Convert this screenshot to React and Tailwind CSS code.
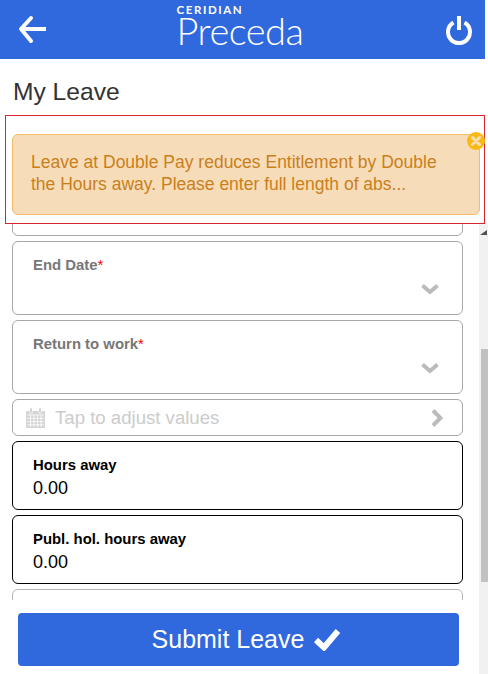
function BackIcon() {
  return (
    <svg width="30" height="30" viewBox="0 0 30 30" fill="none" stroke="white" strokeWidth="4" strokeLinecap="round" strokeLinejoin="round" className="ml-[18px]">
      <path d="M28 14H4" strokeLinecap="butt" />
      <path d="M13 3L3 14L13 26" />
    </svg>
  );
}

function PowerIcon() {
  return (
    <svg width="28" height="30" viewBox="0 0 28 30" fill="none" stroke="white" strokeWidth="4" className="mr-[12px]">
      <path d="M8.500 7.500A11 11 0 1 0 19.500 7.500" />
      <path d="M14 1V15" />
    </svg>
  );
}

function CalendarIcon() {
  return (
    <svg width="19" height="20" viewBox="0 0 19 20" className="ml-[13px] mr-[10px] shrink-0">
      <path fill="#d4d4d4" d="M1 3h2.500v2.500h3V3h6v2.500h3V3H18a1 1 0 0 1 1 1v15a1 1 0 0 1-1 1H1a1 1 0 0 1-1-1V4a1 1 0 0 1 1-1z" />
      <rect x="4" y="0" width="2" height="5" rx="1" fill="#d4d4d4" />
      <rect x="13" y="0" width="2" height="5" rx="1" fill="#d4d4d4" />
      <path stroke="white" strokeWidth="0.8" d="M1 7h17M1 10.300h17M1 13.600h17M1 16.900h17M4.500 7v12M8 7v12M11.500 7v12M15 7v12" />
    </svg>
  );
}

function ChevronDown() {
  return (
    <svg width="18" height="10" viewBox="0 0 18 10" fill="none" stroke="#bbb" strokeWidth="4" className="absolute right-[23px] top-[42px]">
      <path d="M1.500 1.500L9 8L16.500 1.500" />
    </svg>
  );
}

function ChevronRight() {
  return (
    <svg width="12" height="18" viewBox="0 0 12 18" fill="none" stroke="#bbb" strokeWidth="4" className="shrink-0">
      <path d="M2 1.500L9.500 9L2 16.500" />
    </svg>
  );
}

function CheckIcon() {
  return (
    <svg width="26" height="22" viewBox="0 0 26 22" fill="none" stroke="white" strokeWidth="6" className="shrink-0">
      <path d="M2 11L10 18.500L24 2" />
    </svg>
  );
}

function SelectField({ label, required, empty }) {
  return (
    <div className="relative h-[74px] shrink-0 rounded-md border border-[#a8a8a8] pl-5 pt-[14px]">
      {!empty && (
        <div className="text-[14.900px] leading-[18px] font-bold text-[#777]">
          {label}
          {required && <span className="text-[#f00] font-normal">*</span>}
        </div>
      )}
      {!empty && <ChevronDown />}
    </div>
  );
}

function ValueField({ label, value }) {
  return (
    <div className="h-[69px] shrink-0 rounded-md border border-black pl-5 pt-[14px] text-black">
      <div className="text-[14.900px] leading-[18px] font-bold">{label}</div>
      <div className="pt-px text-[18px] leading-[26px]">{value}</div>
    </div>
  );
}

export default function App() {
  return (
    <div className="relative flex h-[674px] w-[488px] flex-col overflow-hidden bg-white font-['Liberation_Sans',Arial,sans-serif]">
      <header className="flex h-[59px] w-[485px] shrink-0 items-center justify-between bg-[#3068dd]">
        <BackIcon />
        <div className="mr-[14px] flex w-[126px] flex-col self-start pt-[4px] text-white">
          <span className="font-['Lato',sans-serif] text-[11.500px] leading-[11px] font-bold tracking-[1.600px]">CERIDIAN</span>
          <span className="font-['Lato',sans-serif] text-[38px] leading-[30px] font-light tracking-[-0.500px]">Preceda</span>
        </div>
        <PowerIcon />
      </header>

      <div className="flex flex-1">
        <main className="flex w-[479px] flex-col">
          <h1 className="h-[56px] shrink-0 pl-[13px] pt-[17px] text-[24.600px] leading-[32px] font-normal text-[#333]">My Leave</h1>

          <div className="flex h-[485px] shrink-0 flex-col gap-[5px] overflow-hidden pl-3 pr-4 pt-[47px]">
            <SelectField empty />
            <SelectField label="End Date" required />
            <SelectField label="Return to work" required />
            <div className="flex h-[37px] shrink-0 items-center rounded-md border border-[#a8a8a8] pr-[19px] text-[18.600px] text-[#ccc]">
              <CalendarIcon />
              <span className="flex-1">Tap to adjust values</span>
              <ChevronRight />
            </div>
            <ValueField label="Hours away" value="0.00" />
            <ValueField label="Publ. hol. hours away" value="0.00" />
            <div className="h-[69px] shrink-0 rounded-md border border-[#b5b5b5]" />
          </div>

          <div className="pl-[18px] pt-[13px]">
            <button className="flex h-[53px] w-[441px] items-center justify-center gap-[10px] rounded-[4px] bg-[#3068dd] pl-[15px] text-[25px] text-white">
              Submit Leave
              <CheckIcon />
            </button>
          </div>
        </main>

        <aside className="mt-[165px] w-[9px] bg-[#f1f1f1] pt-[6px]">
          <svg width="9" height="5" viewBox="0 0 9 5" className="block">
            <polygon points="1,5 8,5 8,0" fill="#505050" />
          </svg>
          <div className="ml-auto mt-[114px] h-[233px] w-[7px] bg-[#c1c1c1]" />
        </aside>
      </div>

      {/* warning toast sits over the form */}
      <div className="absolute left-[5px] top-[115px] h-[109px] w-[480px] border border-[#d9262e] bg-white pl-[6px] pt-[18px]">
        <div className="relative h-[81px] w-[468px] rounded-[6px] border border-[#f3bc6b] bg-[#f6dcb8] pl-[18px] pt-[16px] text-[17.500px] leading-[22px] text-[#cb7f1b]">
          Leave at Double Pay reduces Entitlement by Double
          <br />
          the Hours away. Please enter full length of abs...
          <div className="absolute right-[-6px] top-[-3px] flex h-[18px] w-[18px] items-center justify-center rounded-full bg-[#fdb913]">
            <svg width="10" height="10" viewBox="0 0 10 10" stroke="#f8dfb8" strokeWidth="3" strokeLinecap="round">
              <path d="M1.500 1.500L8.500 8.500M8.500 1.500L1.500 8.500" />
            </svg>
          </div>
        </div>
      </div>
    </div>
  );
}
